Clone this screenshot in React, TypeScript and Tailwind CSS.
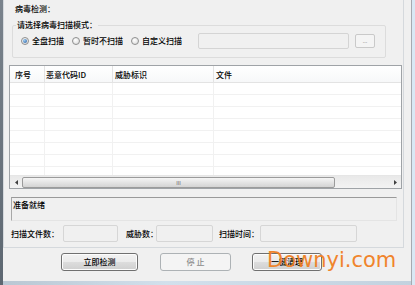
import React from 'react'

const BTN = 'h-[18px] rounded-[3px] border border-[#707070] bg-[linear-gradient(to_bottom,#f2f2f2_0%,#ebebeb_50%,#dddddd_50%,#cfcfcf_100%)] shadow-[inset_0_0_0_1px_#fcfcfc] flex items-center justify-center text-[8px] text-black'
const FIELD = 'h-[17px] rounded-[2px] border border-[#d6d6d6] bg-[#f0f0f0]'

function Radio({ checked, label }: { checked?: boolean; label: string }) {
  return (
    <label className="flex items-center ml-[8px]">
      <span className="w-[8px] h-[8px] rounded-full border border-[#8e8f8f] bg-[radial-gradient(circle_at_40%_35%,#ffffff,#d6d6d6)] flex items-center justify-center">
        {checked && <span className="w-[4px] h-[4px] rounded-full bg-[radial-gradient(circle_at_35%_35%,#9ccbf2,#22589c)]" />}
      </span>
      <span className="ml-[3px] leading-[12px] whitespace-nowrap">{label}</span>
    </label>
  )
}

const COLS = [
  { name: '序号', cls: 'w-[35px] pl-[5px] border-r' },
  { name: '恶意代码ID', cls: 'w-[68px] pl-[1px] border-r' },
  { name: '威胁标识', cls: 'w-[101px] pl-[2px] border-r' },
  { name: '文件', cls: 'flex-1 pl-[2px]' },
]
const ROWS = Array.from({ length: 8 }, (_, i) => i)

export default function App() {
  return (
    <div className="w-[415px] h-[285px] flex overflow-hidden bg-[#f0f0f0] text-[8px] font-medium text-black font-['Noto_Sans_CJK_SC','Noto_Sans',sans-serif]">
      {/* 左边窗口边框 */}
      <div className="w-[3px] bg-[linear-gradient(to_bottom,#7a838c,#5d6771)]" />

      <div className="w-[408px] flex flex-col">
        {/* 外层分组框 */}
        <div className="w-[401px] h-[248px] border-l border-r border-b border-[#d5d9dd] flex flex-col">
          <div className="h-[15px] pt-[3px] pl-[11px] leading-[12px]">病毒检测：</div>

          {/* 扫描模式 */}
          <fieldset className="mt-[4px] ml-[8px] w-[374px] border border-[#dcdcdc] rounded-[2px] pb-[8px]">
            <legend className="ml-[3px] px-[1px] h-[12px] leading-[12px]">请选择病毒扫描模式：</legend>
            <div className="mt-[2px] h-[16px] flex items-center">
              <Radio checked label="全盘扫描" />
              <Radio label="暂时不扫描" />
              <Radio label="自定义扫描" />
              <div className="ml-[16px] w-[151px] h-[16px] rounded-[2px] border border-[#d4d4d4] bg-[#f0f0f0]" />
              <div className="ml-[6px] w-[20px] h-[14px] rounded-[2px] border border-[#c9c9c9] bg-[#f4f4f4] flex items-center justify-center text-[5px] text-[#8a8a8a] leading-none pb-[1px]">...</div>
            </div>
          </fieldset>

          {/* 列表 */}
          <div className="mt-[7px] ml-[5px] w-[393px] h-[124px] border border-[#9fa3a7] bg-white flex flex-col">
            <div className="h-[17px] flex border-b border-[#e3e3e3] bg-[linear-gradient(to_bottom,#ffffff,#f7f8f9)]">
              {COLS.map((c) => (
                <div key={c.name} className={`${c.cls} border-[#e3e3e3] pt-[3px] leading-[12px] whitespace-nowrap`}>{c.name}</div>
              ))}
            </div>
            <div className="flex-1 overflow-hidden">
              {ROWS.map((r) => (
                <div key={r} className="h-[12px] flex border-b border-[#f1f1f1]">
                  {COLS.map((c) => (
                    <div key={c.name} className={`${c.cls} border-[#f1f1f1]`} />
                  ))}
                </div>
              ))}
            </div>
            {/* 横向滚动条 */}
            <div className="h-[13px] flex items-center bg-[linear-gradient(to_bottom,#e9e9e9,#f3f3f3)] border-t border-[#e6e6e6]">
              <div className="w-[12px] flex justify-center">
                <svg width="3" height="5" viewBox="0 0 3 5"><path d="M3 0 L0 2.5 L3 5 Z" fill="#404040" /></svg>
              </div>
              <div className="w-[313px] h-[11px] rounded-[2px] border border-[#9b9b9b] bg-[linear-gradient(to_bottom,#f5f5f5,#e4e4e4_50%,#d4d4d4)] flex items-center justify-center">
                <span className="text-[5px] text-[#7a7a7a] leading-none">III</span>
              </div>
              <div className="flex-1" />
              <div className="w-[12px] flex justify-center">
                <svg width="3" height="5" viewBox="0 0 3 5"><path d="M0 0 L3 2.5 L0 5 Z" fill="#404040" /></svg>
              </div>
            </div>
          </div>

          {/* 状态 */}
          <div className="mt-[8px] ml-[7px] w-[386px] h-[24px] border border-t-[#9a9a9a] border-l-[#a8a8a8] border-r-[#e4e4e4] border-b-[#e4e4e4] pl-[1px] pt-[1px] leading-[12px]">
            准备就绪
          </div>

          {/* 统计 */}
          <div className="mt-[4px] ml-[7px] h-[17px] flex items-center whitespace-nowrap">
            <span className="w-[52px] leading-[12px]">扫描文件数：</span>
            <div className={`${FIELD} w-[55px]`} />
            <span className="ml-[8px] w-[30px] leading-[12px]">威胁数：</span>
            <div className={`${FIELD} w-[57px]`} />
            <span className="ml-[6px] w-[41px] leading-[12px]">扫描时间：</span>
            <div className={`${FIELD} w-[97px]`} />
          </div>
        </div>

        {/* 按钮 */}
        <div className="relative mt-[5px] h-[18px] flex">
          <button className={`${BTN} ml-[58px] w-[77px]`}>立即检测</button>
          <button disabled className="ml-[22px] w-[71px] h-[18px] rounded-[3px] border border-[#adb2b5] bg-[#f4f4f4] flex items-center justify-center text-[8px] text-[#8a8a8a]">停 止</button>
          <button className={`${BTN} ml-[21px] w-[70px]`}>一键清理</button>
          <span className="absolute left-[264px] top-[-3px] text-[21px] leading-[21px] font-normal text-[#f07f22] font-['DejaVu_Sans',sans-serif] opacity-95">Downyi.com</span>
        </div>

        <div className="flex-1" />
        <div className="h-[4px] bg-[linear-gradient(to_right,#b9c7d3,#d2e0ec_40%,#c3d2df)]" />
      </div>

      {/* 右边窗口边框 */}
      <div className="w-[1px] bg-[#a6aab0]" />
      <div className="w-[3px] bg-[#d9e8f4]" />
    </div>
  )
}
